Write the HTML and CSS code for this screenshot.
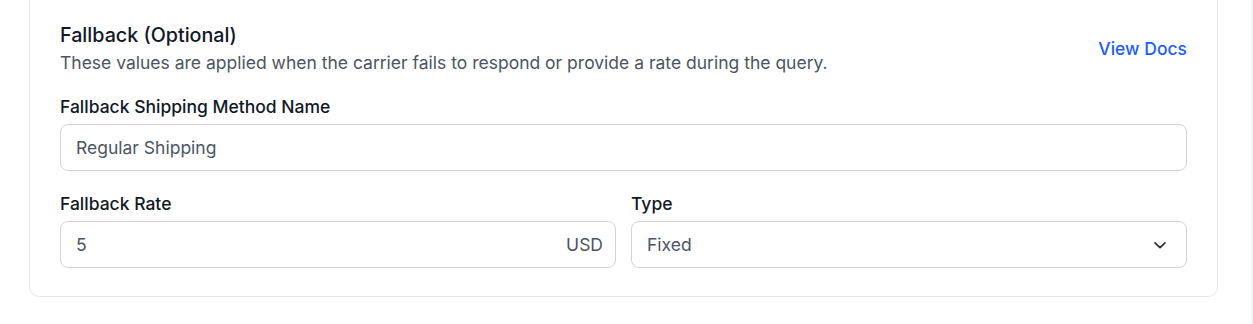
FILE: index.html
```html
<!DOCTYPE html>
<html>
<head>
    <title>Fallback</title>
    <link rel="stylesheet" href="styles.css">
</head>
<body>
    <div class="page">
        <div class="card">
            <div class="card-header">
                <div>
                    <h2 class="card-title">Fallback (Optional)</h2>
                    <p class="card-desc">These values are applied when the carrier fails to respond or provide a rate during the query.</p>
                </div>
                <a class="docs-link" href="#">View Docs</a>
            </div>

            <div class="field">
                <label class="field-label">Fallback Shipping Method Name</label>
                <div class="input-box">
                    <span class="input-value">Regular Shipping</span>
                </div>
            </div>

            <div class="field-row">
                <div class="field">
                    <label class="field-label">Fallback Rate</label>
                    <div class="input-box">
                        <span class="input-value">5</span>
                        <span class="input-suffix">USD</span>
                    </div>
                </div>
                <div class="field">
                    <label class="field-label">Type</label>
                    <div class="input-box">
                        <span class="input-value">Fixed</span>
                        <svg class="chevron" width="16" height="16" viewBox="0 0 16 16" fill="none">
                            <path d="M3 5.8l5 4.8 5-4.8" stroke="#1f2937" stroke-width="1.6" stroke-linecap="round" stroke-linejoin="round"/>
                        </svg>
                    </div>
                </div>
            </div>
        </div>
        <div class="scroll-edge"></div>
    </div>
</body>
</html>
```

FILE: styles.css
```css
body {
    margin: 0;
    font-family: Inter, "Noto Sans", sans-serif;
    background-color: #fff;
    color: #111827;
}
.page {
    display: flex;
    height: 324px;
    overflow: hidden;
}
.card {
    flex: 1;
    margin: -10px 33px 27px 29px;
    padding: 30px 30px 28px 30px;
    border: 1px solid #e5e7eb;
    border-radius: 10px;
}
.scroll-edge {
    width: 2px;
    background-color: #f3f4f6;
}
.card-header {
    display: flex;
    align-items: center;
    justify-content: space-between;
    margin-bottom: 20px;
}
.card-title {
    margin: 0;
    font-size: 19.7px;
    font-weight: 500;
    line-height: 28px;
    color: #111827;
}
.card-desc {
    margin: 1px 0 0;
    font-size: 17.5px;
    line-height: 25px;
    color: #4b5563;
}
.docs-link {
    font-size: 17.5px;
    font-weight: 500;
    color: #1d5cff;
    text-decoration: none;
}
.field {
    display: flex;
    flex-direction: column;
    flex: 1;
}
.field-label {
    font-size: 17.5px;
    font-weight: 500;
    line-height: 24px;
    margin-bottom: 5px;
    color: #111827;
}
.field-row {
    display: flex;
    gap: 15px;
    margin-top: 21px;
}
.input-box {
    display: flex;
    align-items: center;
    justify-content: space-between;
    height: 45px;
    padding: 0 18px 0 15px;
    border: 1px solid #d1d5db;
    border-radius: 8px;
    font-size: 17.5px;
    color: #4b5563;
}
.input-suffix {
    margin-right: -6px;
}
.chevron {
    display: block;
}
```
